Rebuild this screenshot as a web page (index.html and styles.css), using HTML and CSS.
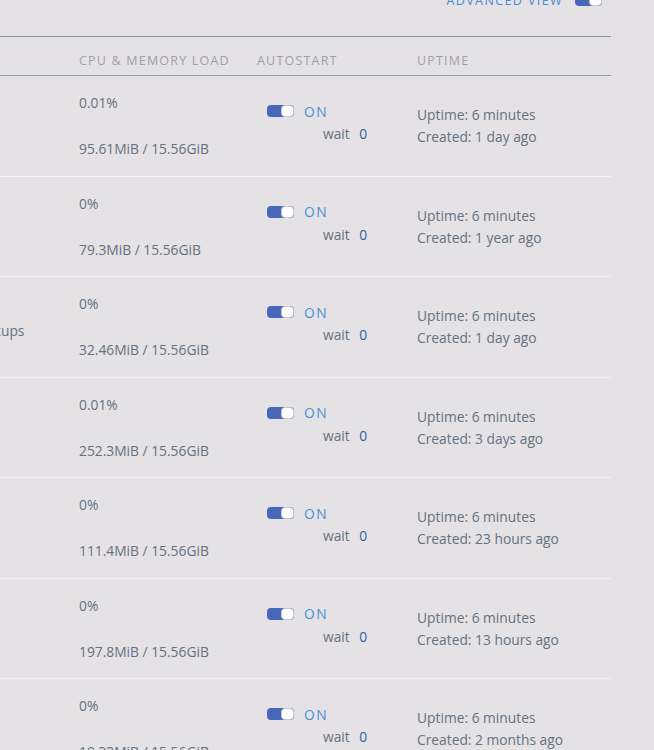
FILE: index.html
```html
<!DOCTYPE html>
<html lang="en">
<head>
  <meta charset="UTF-8">
  <meta name="viewport" content="width=device-width, initial-scale=1.0">
  <title>Docker Containers</title>
  <link rel="stylesheet" href="styles.css">
</head>
<body>
  <div class="docker-page">
    <div class="view-bar">
      <span class="view-label">Advanced View</span>
      <span class="switch small"><span class="knob"></span></span>
    </div>

    <div class="container-table">
      <div class="table-head">
        <div></div>
        <div>CPU &amp; Memory Load</div>
        <div>Autostart</div>
        <div>Uptime</div>
      </div>

      <div class="table-row">
        <div class="name-cell"></div>
        <div class="load-cell"><span class="cpu">0.01%</span><span class="mem">95.61MiB / 15.56GiB</span></div>
        <div class="auto-cell">
          <div class="auto-line"><span class="switch"><span class="knob"></span></span><span class="on">ON</span></div>
          <div class="wait">wait <b>0</b></div>
        </div>
        <div class="uptime-cell"><span>Uptime: 6 minutes</span><span>Created: 1 day ago</span></div>
      </div>

      <div class="table-row">
        <div class="name-cell"></div>
        <div class="load-cell"><span class="cpu">0%</span><span class="mem">79.3MiB / 15.56GiB</span></div>
        <div class="auto-cell">
          <div class="auto-line"><span class="switch"><span class="knob"></span></span><span class="on">ON</span></div>
          <div class="wait">wait <b>0</b></div>
        </div>
        <div class="uptime-cell"><span>Uptime: 6 minutes</span><span>Created: 1 year ago</span></div>
      </div>

      <div class="table-row">
        <div class="name-cell"><span class="desc">backups</span></div>
        <div class="load-cell"><span class="cpu">0%</span><span class="mem">32.46MiB / 15.56GiB</span></div>
        <div class="auto-cell">
          <div class="auto-line"><span class="switch"><span class="knob"></span></span><span class="on">ON</span></div>
          <div class="wait">wait <b>0</b></div>
        </div>
        <div class="uptime-cell"><span>Uptime: 6 minutes</span><span>Created: 1 day ago</span></div>
      </div>

      <div class="table-row">
        <div class="name-cell"></div>
        <div class="load-cell"><span class="cpu">0.01%</span><span class="mem">252.3MiB / 15.56GiB</span></div>
        <div class="auto-cell">
          <div class="auto-line"><span class="switch"><span class="knob"></span></span><span class="on">ON</span></div>
          <div class="wait">wait <b>0</b></div>
        </div>
        <div class="uptime-cell"><span>Uptime: 6 minutes</span><span>Created: 3 days ago</span></div>
      </div>

      <div class="table-row">
        <div class="name-cell"></div>
        <div class="load-cell"><span class="cpu">0%</span><span class="mem">111.4MiB / 15.56GiB</span></div>
        <div class="auto-cell">
          <div class="auto-line"><span class="switch"><span class="knob"></span></span><span class="on">ON</span></div>
          <div class="wait">wait <b>0</b></div>
        </div>
        <div class="uptime-cell"><span>Uptime: 6 minutes</span><span>Created: 23 hours ago</span></div>
      </div>

      <div class="table-row">
        <div class="name-cell"></div>
        <div class="load-cell"><span class="cpu">0%</span><span class="mem">197.8MiB / 15.56GiB</span></div>
        <div class="auto-cell">
          <div class="auto-line"><span class="switch"><span class="knob"></span></span><span class="on">ON</span></div>
          <div class="wait">wait <b>0</b></div>
        </div>
        <div class="uptime-cell"><span>Uptime: 6 minutes</span><span>Created: 13 hours ago</span></div>
      </div>

      <div class="table-row">
        <div class="name-cell"></div>
        <div class="load-cell"><span class="cpu">0%</span><span class="mem">19.33MiB / 15.56GiB</span></div>
        <div class="auto-cell">
          <div class="auto-line"><span class="switch"><span class="knob"></span></span><span class="on">ON</span></div>
          <div class="wait">wait <b>0</b></div>
        </div>
        <div class="uptime-cell"><span>Uptime: 6 minutes</span><span>Created: 2 months ago</span></div>
      </div>
    </div>
  </div>
</body>
</html>
```

FILE: styles.css
```css
/* General Reset */
* {
  margin: 0;
  padding: 0;
  box-sizing: border-box;
}

body {
  font-family: 'Open Sans', 'DejaVu Sans', sans-serif;
  font-size: 13.8px;
  background-color: #e4e2e4;
  color: #66717f;
  overflow: hidden;
  height: 750px;
}

.docker-page {
  width: 611px;
}

/* Top bar with the view switch */
.view-bar {
  height: 37px;
  display: flex;
  justify-content: flex-end;
  align-items: flex-start;
  gap: 12px;
  padding-right: 9px;
  border-bottom: 1px solid #8d95a4;
}

.view-label {
  margin-top: -8px;
  line-height: 18px;
  font-size: 12.5px;
  letter-spacing: 1.4px;
  text-transform: uppercase;
  color: #4a8bd0;
}

.switch.small {
  margin-top: -6px;
}

/* Toggle switch */
.switch {
  display: inline-flex;
  justify-content: flex-end;
  width: 27px;
  height: 12px;
  border-radius: 4px;
  background-color: #4767b8;
}

.knob {
  width: 13px;
  height: 12px;
  border-radius: 4px;
  background-color: #fff;
  border: 1px solid #c8c7cc;
}

/* Table */
.table-head,
.table-row {
  display: grid;
  grid-template-columns: 79px 178px 160px 194px;
}

.table-head {
  height: 39px;
  align-items: end;
  padding-bottom: 6px;
  border-bottom: 1px solid #959cab;
  font-size: 12.5px;
  letter-spacing: 1.2px;
  text-transform: uppercase;
  color: #a09fa8;
}

.table-row {
  height: 100.5px;
  border-bottom: 1px solid #f1f0f2;
}

.name-cell {
  overflow: hidden;
}

.desc {
  display: block;
  margin-top: 44px;
  margin-left: -29px;
  white-space: nowrap;
}

.load-cell {
  display: flex;
  flex-direction: column;
  padding-top: 17px;
}

.mem {
  margin-top: 27px;
}

.auto-cell {
  padding-top: 27px;
  padding-left: 10px;
}

.auto-line {
  display: flex;
  align-items: center;
  gap: 10px;
  height: 16px;
}

.on {
  color: #4a8fd6;
  letter-spacing: 1.5px;
}

.wait {
  margin-top: 5px;
  padding-left: 56px;
}

.wait b {
  font-weight: normal;
  color: #2f5ea8;
  margin-left: 6px;
}

.uptime-cell {
  display: flex;
  flex-direction: column;
  gap: 3px;
  padding-top: 29px;
}
```
